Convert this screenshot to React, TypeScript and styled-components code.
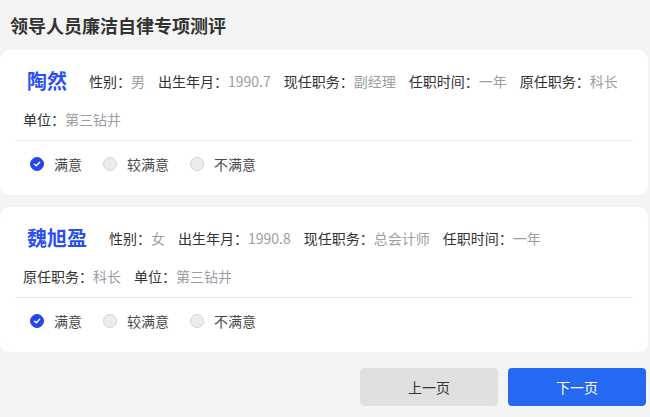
import React, { useState } from "react";
import styled, { createGlobalStyle } from "styled-components";

const GlobalStyle = createGlobalStyle`
  html, body { margin: 0; padding: 0; background: #f4f4f4; }
  body { font-family: "Noto Sans CJK SC", "Noto Sans", sans-serif; color: #333; }
  * { box-sizing: border-box; }
`;

const Page = styled.div`
  width: 650px;
  min-height: 417px;
  background: #f4f4f4;
`;

const Title = styled.h1`
  margin: 0;
  padding-left: 10px;
  height: 50px;
  line-height: 50px;
  font-size: 18px;
  font-weight: 700;
  color: #333;
`;

const CardList = styled.div`
  display: flex;
  flex-direction: column;
  gap: 12px;
`;

const Card = styled.div`
  width: 648px;
  background: #fff;
  border-radius: 10px;
  padding: 16px 15px 8px;
`;

const InfoWrap = styled.div`
  display: flex;
  flex-wrap: wrap;
  align-items: center;
  row-gap: 8px;
  column-gap: 13px;
  padding: 0 4px 6px 8px;
  border-bottom: 1px solid #ececec;
`;

const Name = styled.div`
  height: 30px;
  line-height: 30px;
  font-size: 20px;
  font-weight: 700;
  color: #2b4ff0;
  margin-left: 4px;
  margin-right: 9px;
`;

const Item = styled.div`
  height: 30px;
  line-height: 30px;
  font-size: 14px;
  white-space: nowrap;
`;

const Label = styled.span`
  color: #333;
`;

const Value = styled.span`
  color: #9a9ea4;
`;

const RadioRow = styled.div`
  display: flex;
  align-items: center;
  padding: 12px 0 12px 15px;
  gap: 21px;
`;

const RadioOption = styled.label`
  display: flex;
  align-items: center;
  gap: 10px;
  height: 22px;
  font-size: 14px;
  color: #4a4a4a;
  cursor: pointer;
`;

const RadioDot = styled.span<{ $checked: boolean }>`
  width: 14px;
  height: 14px;
  border-radius: 50%;
  display: inline-flex;
  align-items: center;
  justify-content: center;
  background: ${(p) => (p.$checked ? "#2746e8" : "#ececec")};
  border: 1px solid ${(p) => (p.$checked ? "#2746e8" : "#d4d4d4")};
`;

const Footer = styled.div`
  display: flex;
  justify-content: flex-end;
  gap: 10px;
  padding: 16px 4px 0 0;
`;

const Button = styled.button<{ $primary?: boolean }>`
  width: 138px;
  height: 38px;
  border: none;
  border-radius: 4px;
  font-family: inherit;
  font-size: 14px;
  background: ${(p) => (p.$primary ? "#2568f2" : "#e0e0e0")};
  color: ${(p) => (p.$primary ? "#fff" : "#333")};
  cursor: pointer;
`;

type Person = {
  name: string;
  fields: [string, string][];
};

const people: Person[] = [
  {
    name: "陶然",
    fields: [
      ["性别", "男"],
      ["出生年月", "1990.7"],
      ["现任职务", "副经理"],
      ["任职时间", "一年"],
      ["原任职务", "科长"],
      ["单位", "第三钻井"],
    ],
  },
  {
    name: "魏旭盈",
    fields: [
      ["性别", "女"],
      ["出生年月", "1990.8"],
      ["现任职务", "总会计师"],
      ["任职时间", "一年"],
      ["原任职务", "科长"],
      ["单位", "第三钻井"],
    ],
  },
];

const options = ["满意", "较满意", "不满意"];

const Check = () => (
  <svg width="8" height="8" viewBox="0 0 10 10">
    <path d="M1.8 5.2 L4.1 7.3 L8.3 2.8" fill="none" stroke="#fff" strokeWidth="1.8" strokeLinecap="round" strokeLinejoin="round" />
  </svg>
);

const PersonCard: React.FC<{ person: Person }> = ({ person }) => {
  const [choice, setChoice] = useState(0);
  return (
    <Card>
      <InfoWrap>
        <Name>{person.name}</Name>
        {person.fields.map(([k, v]) => (
          <Item key={k}>
            <Label>{k}：</Label>
            <Value>{v}</Value>
          </Item>
        ))}
      </InfoWrap>
      <RadioRow>
        {options.map((o, i) => (
          <RadioOption key={o} onClick={() => setChoice(i)}>
            <RadioDot $checked={choice === i}>{choice === i && <Check />}</RadioDot>
            {o}
          </RadioOption>
        ))}
      </RadioRow>
    </Card>
  );
};

export default function App() {
  return (
    <Page>
      <GlobalStyle />
      <Title>领导人员廉洁自律专项测评</Title>
      <CardList>
        {people.map((p) => (
          <PersonCard key={p.name} person={p} />
        ))}
      </CardList>
      <Footer>
        <Button>上一页</Button>
        <Button $primary>下一页</Button>
      </Footer>
    </Page>
  );
}
